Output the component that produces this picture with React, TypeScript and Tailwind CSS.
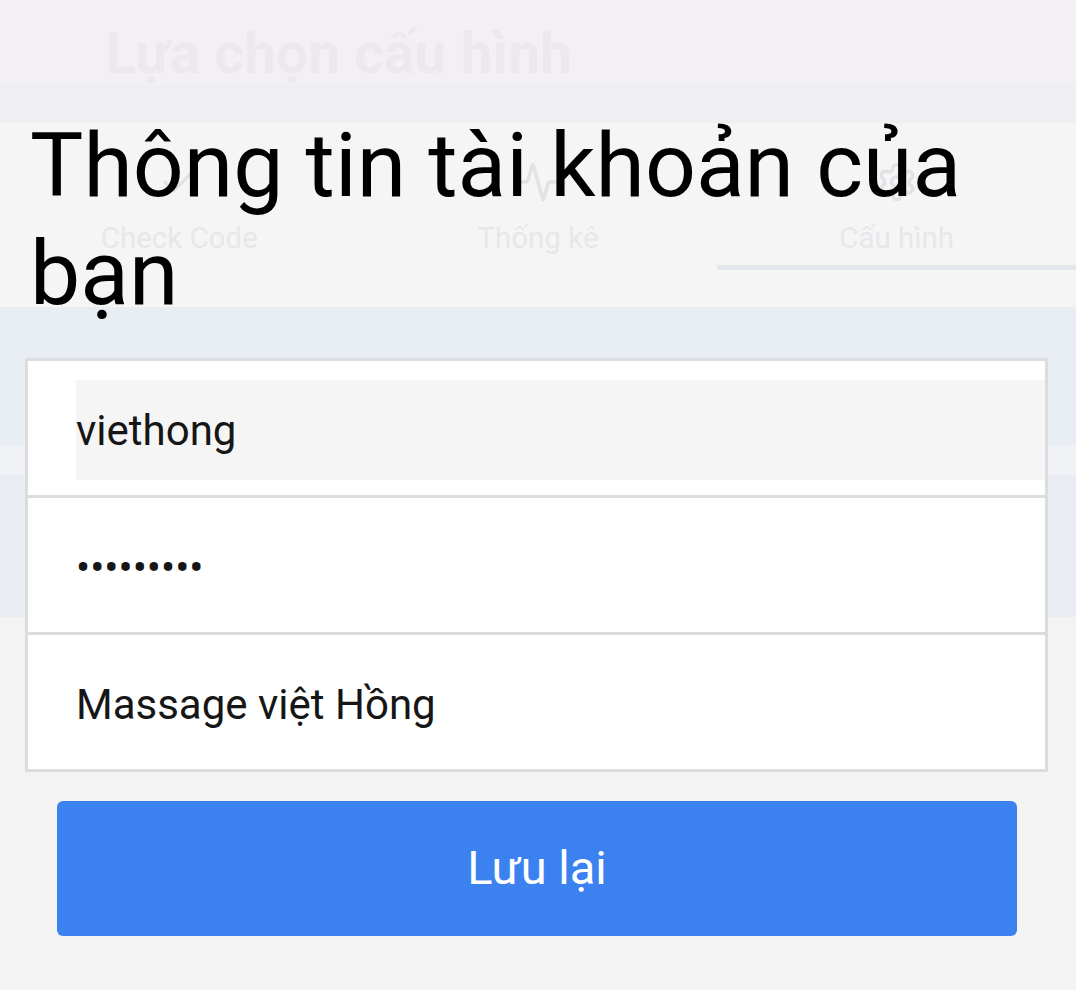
import React from "react";
import { Check, Activity, Settings } from "lucide-react";

const TABS = [
  { label: "Check Code", icon: Check },
  { label: "Thống kê", icon: Activity },
  { label: "Cấu hình", icon: Settings },
];

// Faded page that sits behind the account dialog
function BackgroundPage() {
  return (
    <div className="flex flex-col w-full">
      <div className="h-[85px] bg-[#f2f0f3] pl-[105px] pt-[22px]">
        <h2 className="text-[57px] font-bold leading-[64px] text-[#ebe9ec]">Lựa chọn cấu hình</h2>
      </div>
      <div className="h-[38px] bg-[#efeef1]" />
      <div className="h-[184px] bg-[#f5f5f6] flex flex-col">
        <div className="grid grid-cols-3 h-[142px]">
          {TABS.map((tab, i) => {
            const Icon = tab.icon;
            return (
              <div key={tab.label} className="flex flex-col items-center justify-end relative">
                <Icon className="w-[42px] h-[42px] text-[#e2e2e6] mb-[18px]" strokeWidth={2} />
                <span className="text-[29.5px] leading-[34px] text-[#e7e7ea] mb-[10px]">{tab.label}</span>
                {i === 2 && <div className="absolute left-0 right-0 bottom-[-5px] h-[5px] bg-[#e3e8ee]" />}
              </div>
            );
          })}
        </div>
      </div>
      <div className="h-[139px] bg-[#e8ecf3]" />
      <div className="h-[29px] bg-[#f0f1f4]" />
      <div className="h-[142px] bg-[#e9edf3]" />
      <div className="h-[373px] bg-[#f3f3f4]" />
    </div>
  );
}

function Field({ type = "text", value, shaded, first }: { type?: string; value: string; shaded?: boolean; first?: boolean }) {
  return (
    <div
      className={[
        "flex items-center pl-[48px] pt-[4px]",
        first ? "h-[134px]" : "h-[137px] border-t-[3px] border-[#dcdce0]",
      ].join(" ")}
    >
      <input
        type={type}
        defaultValue={value}
        readOnly
        className={[
          "w-full h-[100px] outline-none text-[42px] text-[#161616]",
          shaded ? "bg-[#f5f5f6]" : "bg-transparent",
        ].join(" ")}
      />
    </div>
  );
}

export default function App() {
  return (
    <div className="relative w-full h-[990px] overflow-hidden" style={{ fontFamily: "Roboto, 'Noto Sans', sans-serif" }}>
      <BackgroundPage />

      {/* Account dialog */}
      <div className="absolute inset-0 flex flex-col">
        <h1 className="mt-[112px] pl-[30px] pr-[30px] text-[89.5px] leading-[108px] font-normal text-black">
          Thông tin tài khoản của bạn
        </h1>

        <div className="mt-[30px] ml-[25px] mr-[28px] flex flex-col">
          <div className="border-[3px] border-[#dcdce0] bg-white">
            <Field value="viethong" shaded first />
            <Field type="password" value="123456789" />
            <Field value="Massage việt Hồng" />
          </div>

          <button className="mt-[29px] ml-[32px] mr-[31px] h-[135px] rounded-[6px] bg-[#3b82f0] text-white text-[47px]">
            Lưu lại
          </button>
        </div>
      </div>
    </div>
  );
}
